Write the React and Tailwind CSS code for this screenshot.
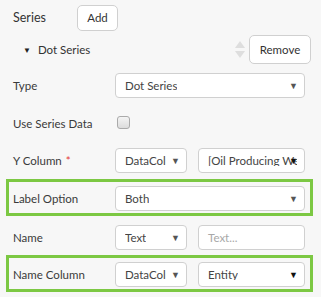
import React from "react";

const font = { fontFamily: 'Lato, "Noto Sans", sans-serif' };

function Select({ value, className = "", clip = "pr-[20px]", darkArrow = false }) {
  return (
    <div
      className={`relative min-w-0 h-[25px] bg-white border border-[#d0d0d0] rounded-[4px] flex items-center pl-[9px] ${clip} ${className}`}
    >
      <span className="block min-w-0 overflow-hidden whitespace-nowrap text-[11.5px] leading-none text-[#444]">
        {value}
      </span>
      <span
        className={`absolute right-[6px] top-[7px] text-[9px] leading-none ${
          darkArrow ? "text-[#111]" : "text-[#555]"
        }`}
      >
        ▼
      </span>
    </div>
  );
}

function Row({ label, required, children, h = "h-[38px]", pt = "pt-[7px]" }) {
  return (
    <div className={`flex items-start ${pt} ${h}`}>
      <div className="w-[102px] shrink-0 text-[11.5px] leading-[25px] text-[#3a3a3a]">
        {label}
        {required && <span className="text-[#e53935] ml-[4px]">*</span>}
      </div>
      <div className="flex-1 min-w-0 flex gap-[11px]">{children}</div>
    </div>
  );
}

function Highlight({ children }) {
  return (
    <div className="-ml-[7px] -mr-[8px] border-[3px] border-[#7cc843] pl-[4px] pr-[5px] h-[37px]">
      <div className="-mt-[3px]">{children}</div>
    </div>
  );
}

export default function App() {
  return (
    <div className="w-[321px] h-[297px] bg-[#f7f7f7] overflow-hidden" style={font}>
      <div className="pl-[13px] pr-[16px]">
        <div className="flex items-center pt-[5px] h-[31px]">
          <span className="text-[12.5px] text-[#333] w-[64px]">Series</span>
          <button className="h-[26px] w-[41px] bg-white border border-[#d0d0d0] rounded-[5px] text-[11.5px] text-[#333]">
            Add
          </button>
        </div>

        <div className="flex items-center h-[33px] mt-[2px]">
          <span className="text-[8px] text-[#222] ml-[10px] mr-[7px] leading-none">▼</span>
          <span className="text-[11.5px] text-[#333]">Dot Series</span>
          <div className="ml-auto flex items-center">
            <div className="flex flex-col items-center gap-[3px] mr-[4px]">
              <span className="w-0 h-0 border-l-[5px] border-r-[5px] border-b-[7px] border-l-transparent border-r-transparent border-b-[#dedede]" />
              <span className="w-0 h-0 border-l-[5px] border-r-[5px] border-t-[7px] border-l-transparent border-r-transparent border-t-[#dedede]" />
            </div>
            <button className="h-[29px] w-[62px] bg-white border border-[#d0d0d0] rounded-[5px] text-[11.5px] text-[#333] -mr-[6px]">
              Remove
            </button>
          </div>
        </div>

        <Row label="Type">
          <Select value="Dot Series" className="flex-1" />
        </Row>
        <Row label="Use Series Data">
          <div className="mt-[5px] ml-[2px] w-[13px] h-[13px] rounded-[3px] border border-[#aaa] bg-gradient-to-b from-[#f4f4f4] to-[#dcdcdc]" />
        </Row>
        <Row label="Y Column" required h="h-[37px]" pt="pt-[6px]">
          <Select value="DataColumn" className="w-[72px] shrink-0" />
          <Select value="[Oil Producing Wells]" className="flex-1 overflow-hidden" clip="pr-[7px]" darkArrow />
        </Row>
        <Highlight>
          <Row label="Label Option" h="h-[34px]">
            <Select value="Both" className="flex-1" />
          </Row>
        </Highlight>
        <Row label="Name" h="h-[39px]" pt="pt-[9px]">
          <Select value="Text" className="w-[72px] shrink-0" />
          <div className="flex-1 min-w-0 h-[25px] bg-white border border-[#d0d0d0] rounded-[4px] flex items-center pl-[9px] text-[11.5px] text-[#a8a8a8]">
            Text...
          </div>
        </Row>
        <Highlight>
          <Row label="Name Column" h="h-[34px]">
            <Select value="DataColumn" className="w-[72px] shrink-0" />
            <Select value="Entity" className="flex-1" darkArrow />
          </Row>
        </Highlight>
      </div>
    </div>
  );
}
